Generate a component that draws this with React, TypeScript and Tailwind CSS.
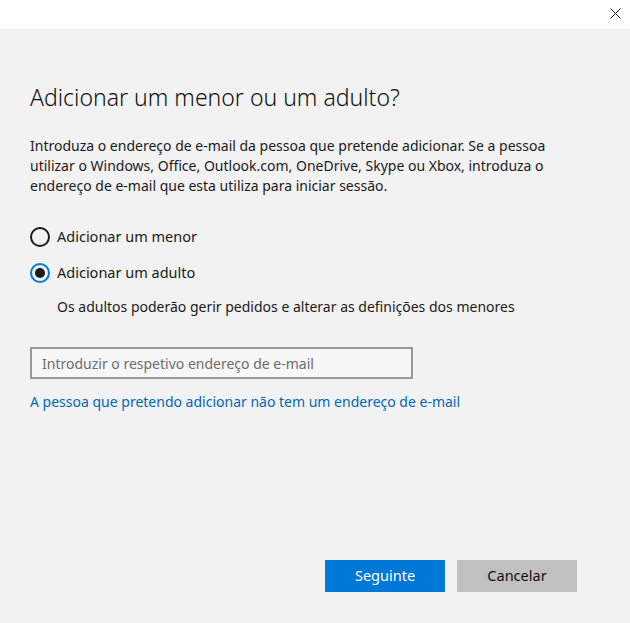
import { useState } from "react";

function Radio({ checked, label, onClick }: { checked: boolean; label: string; onClick: () => void }) {
  return (
    <button onClick={onClick} className="flex items-center gap-[7px] h-[20px] text-left">
      <span
        className={
          "flex items-center justify-center w-[20px] h-[20px] rounded-full border-2 " +
          (checked ? "border-[#0078d7]" : "border-[#1a1a1a]")
        }
      >
        {checked && <span className="w-[10px] h-[10px] rounded-full bg-[#1a1a1a]" />}
      </span>
      <span className="text-[14.5px] text-[#1a1a1a]">{label}</span>
    </button>
  );
}

export default function App() {
  const [adult, setAdult] = useState(true);

  return (
    <div
      className="w-[630px] h-[623px] flex flex-col bg-[#f2f2f2] text-[#1a1a1a]"
      style={{ fontFamily: '"Noto Sans", "Open Sans", sans-serif' }}
    >
      {/* Title bar */}
      <div className="h-[29px] bg-white flex justify-end items-start">
        <button className="w-[30px] h-[26px] flex items-center justify-center text-[#222]">
          <svg width="11" height="11" viewBox="0 0 11 11" stroke="currentColor" strokeWidth="1">
            <path d="M0.5 0.5L10.5 10.5M10.5 0.5L0.5 10.5" />
          </svg>
        </button>
      </div>

      <div className="flex-1 flex flex-col px-[30px] pt-[53px]">
        <h1 className="text-[23px] font-light leading-[30px] text-[#111]">
          Adicionar um menor ou um adulto?
        </h1>

        <p className="mt-[24px] text-[14px] leading-[20px] whitespace-nowrap">
          Introduza o endereço de e-mail da pessoa que pretende adicionar. Se a pessoa
          <br />
          utilizar o Windows, Office, Outlook.com, OneDrive, Skype ou Xbox, introduza o
          <br />
          endereço de e-mail que esta utiliza para iniciar sessão.
        </p>

        <div className="mt-[31px] flex flex-col gap-[16px]">
          <Radio checked={!adult} label="Adicionar um menor" onClick={() => setAdult(false)} />
          <Radio checked={adult} label="Adicionar um adulto" onClick={() => setAdult(true)} />
        </div>

        <p className="mt-[14px] ml-[27px] text-[14px] leading-[20px]">
          Os adultos poderão gerir pedidos e alterar as definições dos menores
        </p>

        <input
          className="mt-[30px] w-[383px] h-[32px] border-2 border-[#999999] bg-[#f7f7f7] px-[10px] text-[14px] placeholder:text-[#6d6d6d] outline-none"
          placeholder="Introduzir o respetivo endereço de e-mail"
        />

        <a href="#" className="mt-[13px] text-[14px] leading-[20px] text-[#0067b8] w-fit">
          A pessoa que pretendo adicionar não tem um endereço de e-mail
        </a>

        <div className="mt-auto mb-[31px] flex justify-end gap-[12px] pr-[23px]">
          <button className="w-[120px] h-[32px] bg-[#0078d7] text-white text-[14.5px]">Seguinte</button>
          <button className="w-[120px] h-[32px] bg-[#c0c0c0] text-[#111] text-[14.5px]">Cancelar</button>
        </div>
      </div>
    </div>
  );
}
